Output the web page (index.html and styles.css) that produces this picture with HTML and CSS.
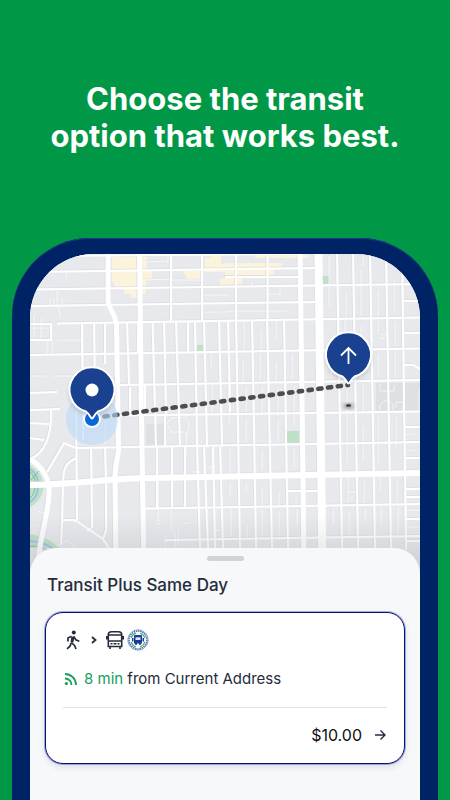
FILE: index.html
```html
<!DOCTYPE html>
<html lang="en">
<head>
<meta charset="utf-8">
<meta name="viewport" content="width=device-width, initial-scale=1">
<title>Transit options</title>
<link rel="stylesheet" href="styles.css">
</head>
<body>
<main class="promo">
  <h1 class="headline">Choose the transit<br>option that works best.</h1>
  <div class="phone">
    <div class="screen">
      <svg class="map" viewBox="30 254 390 320" preserveAspectRatio="xMidYMin slice" role="img" aria-label="Route map">
        <defs>
          <g id="roads" fill="none">
            <g stroke-width="1" opacity=".65">
              <path d="M30 328h20M30 340h18M34 316v22M41 318v20M47 340v14M52 340v14M57 340h24M30 376h16M53 376h24M57 290v14l4 14M50 298v8M54 298v8M62 298v8M66 272v8M143 262l25-1v-6M143 280l27-1M172 280h30M205 295h24M205 312h24M211 353v16M225 311h62M268 294h12v-8M252 282v6"/>
              <path d="M276 320v20M261 330v22M244 322v28M229 353v28M243 360v22M260 354v26M276 362v20M292 354v24M212 385v28M229 385v40M246 386v26M262 386v28M278 386v30M294 386v40M230 448v26M246 418v24M262 450v20M278 420v22M294 448v20M212 448v28M204 448v28M230 482v14M246 482v10M262 488v18M279 492v14M296 498v8M231 509v28M247 525v12M262 509v26M279 511v24M297 509v16"/>
              <path d="M329 256v50M346 293v25M361 270v45M363 254v12M378 290v26M394 278v32M345 320v28M361 326v20M378 320v14M380 334h6M379 338h7M395 322v24M361 352v26M378 354v20M395 352v26M331 354v24M347 384v30M347 414v48M363 384v28M363 426v34M378 414v48M396 416v30M348 476v26M364 480v22M380 476v14M397 480v22M333 508v16M365 508v14M381 506v20M398 506v28M349 510v24M348 492h8M349 500l4-4"/>
              <path d="M30 409l8 1M158 480v40a2 2 0 1 0 .1 0M171 510v18l4 4v18M178 545v-16M165 550v-15M192 472h9M207 467h6M184 523h6M214 530h6M167 424l3-6 16-1 3 7-3 14M167 424l4 8h15v20M60 545l7-5 12 10M61 546l4 12M105 416v28M38 511l6 2M31 524l6 2M405 434h10M406 450h10M406 510h14M406 527h14M380 384v7h14v-6M380 410v-5c4-6 10-6 13 0v5M396 408v-6h7v9M419 390v20"/>
            </g>
            <g stroke-width="2">
              <path d="M30 272L315 268M30 289.500L420 284M30 306L315 302M57 323.500L420 317.500M30 355L420 348.500M57 392L30 393M120 385L420 380M30 410L60 409M118 415.500L420 411.500M77 448L420 442M145 508.500L420 504M165 540L420 536M36 256L300 254M30 340h21v-16h-20M225 277h75M287 491h30M402 301h18M402 333h18M403 365h10l7 4M405 427h15M405 442h15M405 458h15M405 489h15M405 497h15M405 519h15M405 541h15"/>
              <path d="M171 254v67M202 254v67M236 254v66M267.500 254v66M82 324L83 440M94 324L95 400M105 324v40M127 323L129 385M138 323v30M152.500 322L156 447M164 322L166 415M176 322L180 447M188 322v31M195 322L197 447M204 322L207 447M219 322L222 447"/>
              <path d="M228 320L230 412M236 320L240 550M252 320L256 550M267 320L272 550M284 320L288 550M337 254L342 550M353 254L358 550M370 254L375 550M386 254L391 550M402 254L406 550"/>
              <path d="M157 447v62M172 447v62M185 447v62M197 447L200 550M204 447L208 550M213 447L215 550M130 387v28M145 385v30M165 415v32M220 447L223 550"/>
              <path d="M76 410L77 520M91 447L92 528M105 447L106 485V530L103 539M51 410C52 440 43 453 31 459M30 423l19 1M30 438l14 2M47 472L64 443L78 449M77 458C65 462 63 470 63 483L62 520L61 545M62 520H75L103 539L110 550M77 520l-3 2M91 528l-4 3"/>
            </g>
            <path stroke-width="5" d="M108 254V301C109 309 116 316 116.500 325L118.500 450C117 462 115 466 115 476L116 575M139.500 254L141.500 420L144 575M300 254L302 400L304 575M30 459C42 466 50 480 49 492C49 512 40 535 36 575"/>
            <path stroke-width="6" d="M30 485C80 484 110 478 150 478L420 473"/>
            <path stroke-width="8" d="M318.500 254L320 380L322.500 575"/>
          </g>
          <linearGradient id="shade" x1="0" y1="0" x2="0" y2="1">
            <stop offset="0" stop-color="#8b8e96" stop-opacity="0"/>
            <stop offset="1" stop-color="#8b8e96" stop-opacity=".3"/>
          </linearGradient>
          <filter id="soft" x="-50%" y="-50%" width="200%" height="200%"><feGaussianBlur stdDeviation="2"/></filter>
        </defs>
        <rect x="30" y="254" width="390" height="320" fill="#e8e9ed"/>
        <path fill="#dfe0e4" d="M146 424h20v20h-20zM376 383h44v28h-44z"/>
        <path fill="#fcf3dc" d="M112 257h25v41h-6v-4h-7v-6h-8l-4-8zM142 257h5v14h5v8h-6v15h-4zM205 258h6v-4h10v10h4v8h-20zM183 271h20v8h-16zM220 279h10v6h-10zM225 263h57v4h-8v8h-49zM225 277h17v7h-17zM255 255h53v3h-53z"/>
        <path fill="#bfe0c5" d="M197 345h6v6h-6zM322 276h7v8h-7zM287 431h12v12h-12zM30 465q13 8 14 22q-3 15-14 20zM30 534q17 2 29 14h-29z"/>
        <path fill="none" stroke="#9dbdf0" stroke-width="2" d="M30 469q9 6 8 17q0 11-8 16M30 541q15 1 23 8"/>
        <path fill="none" stroke="#7fc18d" d="M30 472q6 5 5 13q0 9-5 13M30 546q12 0 18 5M31 480l8-9"/>
        <use href="#roads" stroke="#d9dadf" transform="translate(-1 -1)" opacity=".6"/>
        <use href="#roads" stroke="#fff"/>
        <rect x="30" y="515" width="390" height="59" fill="url(#shade)"/>
        <path d="M104.500 416.500L348 385" fill="none" stroke="#4d4d4f" stroke-width="4.600" stroke-linecap="round" stroke-dasharray="3.200 6.600"/>
        <circle cx="92" cy="419" r="26" fill="#b9d8f8" fill-opacity=".6"/>
        <circle cx="92" cy="419" r="8" fill="#0b66d8" stroke="#fff" stroke-width="2"/>
        <ellipse cx="348.500" cy="406" rx="5" ry="2" fill="#777" filter="url(#soft)"/>
        <ellipse cx="348.500" cy="405.500" rx="2.500" ry="1.300" fill="#333"/>
        <g id="pin">
          <circle cx="92" cy="393" r="23" fill="#666" opacity=".25" filter="url(#soft)"/>
          <path d="M92 418.500c-1.500 0-2.500-5-6-7a22.500 22.500 0 1 1 12 0c-3.500 2-4.500 7-6 7z" fill="#19418f" stroke="#fff" stroke-width="2"/>
        </g>
        <circle cx="92" cy="390" r="6.500" fill="#fff"/>
        <use href="#pin" x="256.500" y="-35"/>
        <path d="M348.500 364V348M341 355.500l7.500-7.500 7.500 7.500" fill="none" stroke="#fff" stroke-width="1.800"/>
      </svg>

      <section class="sheet">
        <div class="handle"></div>
        <h2 class="title">Transit Plus Same Day</h2>
        <article class="card">
          <div class="modes">
            <svg class="walk" viewBox="0 0 16 20" role="img" aria-label="Walk"><circle cx="8.800" cy="2.600" r="2"/><path d="M6.500 6.300L3 8V11.500M6.300 12.500l3.200 3L11 19M6 13l-.8 3L2 18.800M8.500 6.300l2.300 3.500 3.500 1.400"/><path class="torso" d="M7.800 6.800L7 12.200"/></svg>
            <svg class="chevron" viewBox="0 0 6 8" aria-hidden="true"><path d="M1 1l3.500 3L1 7"/></svg>
            <svg class="bus" viewBox="0 0 18 20" role="img" aria-label="Bus"><path d="M2.300 16.500V4.500C2.300 2.500 3.500 1.700 5.500 1.700h7c2 0 3.200.8 3.200 2.800v12zM2.500 5h13M2.500 11h13M.8 6v3.500M17.200 6v3.500M4 16.500V19M14 16.500V19M4.500 13.700h2M11.500 13.700h2M7.500 13.700h3"/></svg>
            <svg class="agency" viewBox="0 0 22 22" role="img" aria-label="Transit agency">
              <circle cx="11" cy="11" r="10.200" fill="#fff" stroke="#7f98c6" stroke-width=".9"/>
              <circle cx="11" cy="11" r="8.900" fill="none" stroke="#4566ae" stroke-width="1.500" stroke-dasharray="1.400 .8"/>
              <circle cx="11" cy="11" r="7.100" fill="none" stroke="#42b86d" stroke-width="1.200" stroke-dasharray="7 4.150" stroke-dashoffset="-2"/>
              <path d="M7 7Q7 6 8 6h6q1 0 1 1V14.500h-1v1.300h-2V14.500h-2v1.300H8V14.500H7zM5 9h1.500v3.500H5zM15.500 9H17v3.500h-1.500z" fill="#1c3a98"/>
              <path d="M8.500 8.300h5v2.700h-5z" fill="#dce8fa"/>
            </svg>
          </div>
          <p class="eta">
            <svg class="live" viewBox="0 0 14 14" aria-hidden="true"><path d="M1 2A11 11 0 0 1 12 13M1 6.500A6.500 6.500 0 0 1 7.500 13"/><circle cx="2.400" cy="11.600" r="1.600"/></svg>
            <span><span class="minutes">8 min</span> from Current Address</span>
          </p>
          <button class="fare" type="button">
            <span>$10.00</span>
            <svg class="arrow" viewBox="0 0 12 12" aria-hidden="true"><path d="M1 6h10M6.500 1.500L11 6l-4.500 4.500"/></svg>
          </button>
        </article>
      </section>
    </div>
  </div>
</main>
</body>
</html>
```
FILE: styles.css
```css
* {
  box-sizing: border-box;
}

body {
  margin: 0;
  background: #009846;
  color: #252c3b;
  font-family: Inter, "Liberation Sans", sans-serif;
}

.promo {
  display: flex;
  flex-direction: column;
  min-height: 100vh;
}

.headline {
  margin: 80px 0 84px;
  color: #fff;
  font-size: 31px;
  font-weight: 700;
  line-height: 37px;
  text-align: center;
}

.phone {
  display: flex;
  flex: 1;
  margin: 0 12px;
  padding: 16px 18px 0;
  border-radius: 78px 78px 0 0;
  background: #002366;
  box-shadow: inset 0 1px #1c3c80;
}

.screen {
  display: flex;
  flex: 1;
  flex-direction: column;
  min-width: 0;
  overflow: hidden;
  border-radius: 64px 64px 0 0;
  background: #f7f8fa;
}

.map {
  display: block;
  width: 100%;
  height: 320px;
}

.sheet {
  position: relative;
  flex: 1;
  margin-top: -26px;
  padding: 8px 15px 36px;
  border-radius: 26px 26px 0 0;
  background: #f7f8fa;
}

.handle {
  width: 37px;
  height: 5px;
  margin: 0 auto;
  border-radius: 3px;
  background: #d2d3d7;
}

.title {
  margin: 12px 2px 15px;
  font-size: 17px;
  font-weight: 500;
  line-height: 24px;
}

.card {
  padding: 16px 17px 18px;
  border: 1px solid #00107e;
  border-radius: 18px;
  background: #fff;
  box-shadow: 0 0 0 1px rgba(0, 16, 126, 0.3), 0 3px 6px rgba(20, 30, 70, 0.12);
}

.modes {
  display: flex;
  align-items: center;
  height: 22px;
}

.walk,
.chevron,
.bus,
.live,
.arrow {
  fill: none;
  stroke: #252c3b;
}

.walk {
  width: 16px;
  height: 20px;
  margin-left: 2px;
  stroke-width: 1.7;
}

.walk circle {
  fill: #252c3b;
  stroke: none;
}

.walk .torso {
  stroke-width: 3;
}

.chevron {
  width: 6px;
  height: 8px;
  margin: 0 9px 0 10px;
  stroke-width: 1.8;
}

.bus {
  width: 18px;
  height: 20px;
  stroke-width: 1.6;
}

.agency {
  width: 22px;
  height: 22px;
  margin-left: 3px;
}

.eta {
  display: flex;
  align-items: center;
  gap: 6px;
  margin: 18px 1px;
  font-size: 15px;
  line-height: 20px;
}

.live {
  width: 14px;
  height: 14px;
  stroke: #12a05a;
  stroke-width: 1.8;
}

.live circle {
  fill: #12a05a;
  stroke: none;
}

.minutes {
  color: #12a05a;
}

.fare {
  display: flex;
  align-items: center;
  justify-content: flex-end;
  gap: 12px;
  width: 100%;
  padding: 17px 1px 0;
  border: 0;
  border-top: 1px solid #e1e2e5;
  background: none;
  color: #101014;
  font: 400 16px/20px Inter, "Liberation Sans", sans-serif;
}

.arrow {
  width: 12px;
  height: 12px;
  stroke-width: 1.4;
}
```
